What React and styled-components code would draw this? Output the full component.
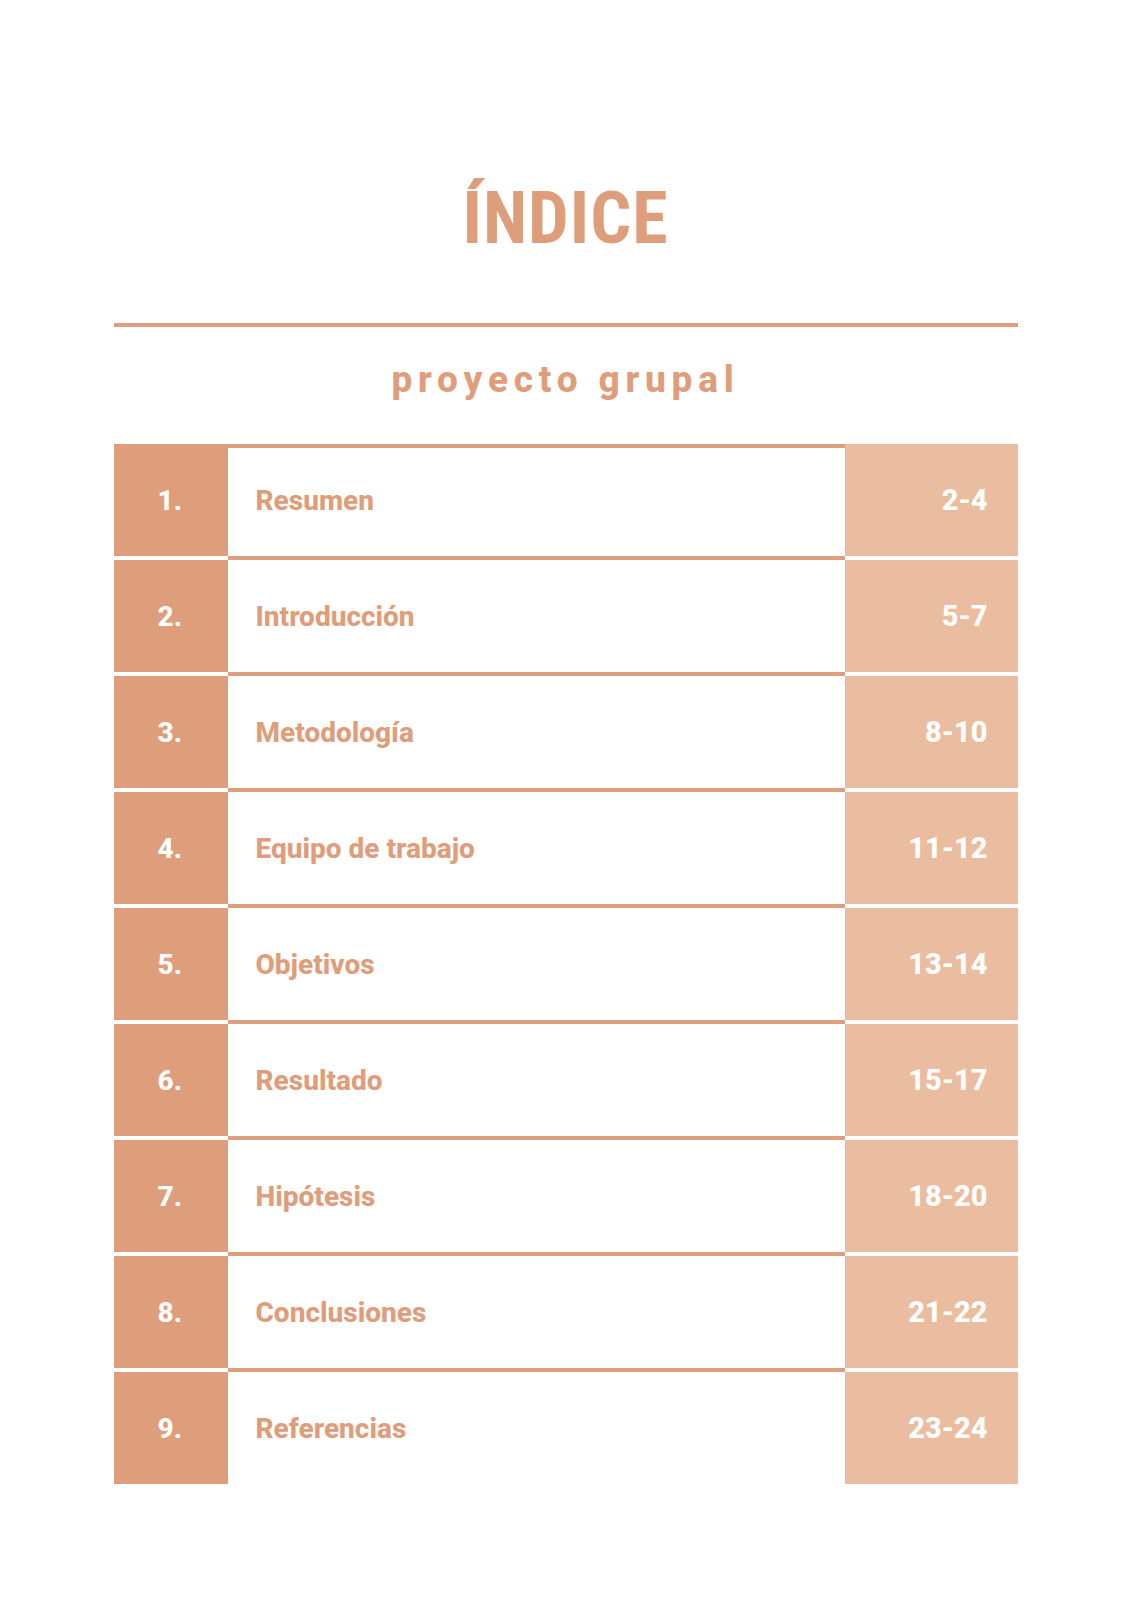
import React from "react";
import styled, { createGlobalStyle } from "styled-components";

const DARK = "#DF9E7B";
const LIGHT = "#EBBDA0";
const FONT = `Roboto, "Liberation Sans", Arial, sans-serif`;

const Global = createGlobalStyle`
  html, body { margin: 0; padding: 0; background: #ffffff; }
  body { font-family: ${FONT}; }
`;

const Page = styled.div`
  width: 904px;
  margin: 0 auto;
  padding-top: 183px;
  padding-bottom: 115px;
  display: flex;
  flex-direction: column;
`;

const Title = styled.h1`
  margin: 0;
  text-align: center;
  font-family: ${FONT};
  font-stretch: 87.5%;
  font-weight: 700;
  font-size: 72px;
  line-height: 72px;
  letter-spacing: 1px;
  color: ${DARK};
`;

const Rule = styled.hr`
  margin: 68px 0 0;
  border: 0;
  height: 4px;
  background: ${DARK};
`;

const Subtitle = styled.h2`
  margin: 34px 0 0;
  text-align: center;
  font-family: ${FONT};
  font-weight: 800;
  font-size: 37px;
  line-height: 37px;
  letter-spacing: 5.8px;
  color: ${DARK};
`;

const Table = styled.div`
  margin-top: 46px;
  display: flex;
  flex-direction: column;
`;

const Row = styled.div`
  display: grid;
  grid-template-columns: 114px 1fr 173px;
  height: ${(p) => (p.$first ? 112 : 116)}px;
`;

const SideCell = styled.div`
  align-self: end;
  height: 112px;
  display: flex;
  align-items: center;
  box-sizing: border-box;
  font-family: ${FONT};
  font-weight: 800;
  font-size: 28px;
  color: #ffffff;
`;

const NumCell = styled(SideCell)`
  background: ${DARK};
  padding-left: 44px;
`;

const PageCell = styled(SideCell)`
  background: ${LIGHT};
  justify-content: flex-end;
  padding-right: 30px;
  font-size: 29px;
`;

const NameCell = styled.div`
  box-sizing: border-box;
  border-top: 4px solid ${DARK};
  background: #ffffff;
  display: flex;
  align-items: center;
  padding-left: 28px;
  padding-bottom: ${(p) => (p.$first ? 4 : 0)}px;
  font-family: ${FONT};
  font-weight: 800;
  font-size: 28px;
  color: ${DARK};
`;

const items = [
  ["1.", "Resumen", "2-4"],
  ["2.", "Introducción", "5-7"],
  ["3.", "Metodología", "8-10"],
  ["4.", "Equipo de trabajo", "11-12"],
  ["5.", "Objetivos", "13-14"],
  ["6.", "Resultado", "15-17"],
  ["7.", "Hipótesis", "18-20"],
  ["8.", "Conclusiones", "21-22"],
  ["9.", "Referencias", "23-24"],
];

export default function App() {
  return (
    <>
      <Global />
      <Page>
        <Title>ÍNDICE</Title>
        <Rule />
        <Subtitle>proyecto grupal</Subtitle>
        <Table>
          {items.map(([n, name, pages], i) => (
            <Row key={n} $first={i === 0}>
              <NumCell>{n}</NumCell>
              <NameCell $first={i === 0}>{name}</NameCell>
              <PageCell>{pages}</PageCell>
            </Row>
          ))}
        </Table>
      </Page>
    </>
  );
}
